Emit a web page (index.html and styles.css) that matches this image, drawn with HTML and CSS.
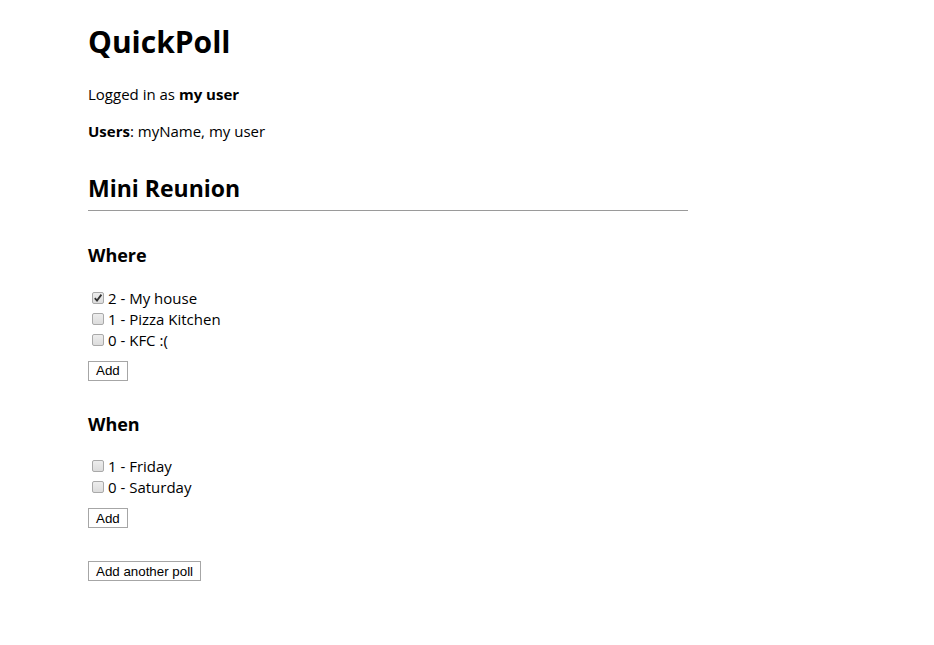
FILE: index.html
```html
<!DOCTYPE html>
<html>
<head>
<meta charset="utf-8">
<title>QuickPoll</title>
<link rel="stylesheet" href="styles.css">
</head>
<body>
<div class="app">
  <h1 class="title">QuickPoll</h1>
  <p class="info">Logged in as <b>my user</b></p>
  <p class="info"><b>Users</b>: myName, my user</p>
  <div class="poll">
    <h2 class="poll-title">Mini Reunion</h2>
    <div class="question">
      <h3 class="q-title">Where</h3>
      <ul class="options">
        <li class="option"><input type="checkbox" class="cb" checked><span>2 - My house</span></li>
        <li class="option"><input type="checkbox" class="cb"><span>1 - Pizza Kitchen</span></li>
        <li class="option"><input type="checkbox" class="cb"><span>0 - KFC :(</span></li>
      </ul>
      <button class="btn">Add</button>
    </div>
    <div class="question">
      <h3 class="q-title">When</h3>
      <ul class="options">
        <li class="option"><input type="checkbox" class="cb"><span>1 - Friday</span></li>
        <li class="option"><input type="checkbox" class="cb"><span>0 - Saturday</span></li>
      </ul>
      <button class="btn">Add</button>
    </div>
  </div>
  <button class="btn another">Add another poll</button>
</div>
</body>
</html>
```
FILE: styles.css
```css
html, body {
  margin: 0;
  padding: 0;
  background: #fff;
}
body {
  font-family: "Open Sans", "Noto Sans", sans-serif;
  font-size: 15px;
  color: #000;
}
.app {
  width: 600px;
  padding: 20px 0 40px 88px;
}
.title {
  font-size: 30px;
  font-weight: bold;
  margin: 0 0 20px 0;
  line-height: 44px;
}
.info {
  margin: 0 0 16px 0;
  line-height: 21px;
}
.poll-title {
  font-size: 23px;
  margin: 30px 0 0 0;
  line-height: 32px;
  padding-bottom: 6px;
  border-bottom: 1px solid #9a9a9a;
}
.question {
  margin-top: 32px;
}
.question + .question {
  margin-top: 31px;
}
.q-title {
  font-size: 18px;
  margin: 0 0 20px 0;
  line-height: 24px;
}
.options {
  list-style: none;
  margin: 0 0 9px 0;
  padding: 0;
}
.option {
  display: flex;
  align-items: center;
  height: 21px;
}
.cb {
  -webkit-appearance: none;
  appearance: none;
  margin: 0 4px 0 4px;
  width: 12px;
  height: 12px;
  border: 1px solid #a9a9a9;
  border-radius: 2px;
  background: linear-gradient(#ededed, #dcdcdc);
  box-sizing: border-box;
}
.cb:checked {
  background: url("data:image/svg+xml;utf8,<svg xmlns='http://www.w3.org/2000/svg' viewBox='0 0 10 10'><path d='M1.8 5.2 L4 7.6 L8.4 1.6' fill='none' stroke='%23333' stroke-width='1.8'/></svg>") center / 10px 10px no-repeat, linear-gradient(#ededed, #dcdcdc);
}
.btn {
  font-family: "Liberation Sans", Arial, sans-serif;
  font-size: 13.33px;
  background: #fff;
  border: 1px solid #a6a6a6;
  padding: 1px 7px;
  height: 20px;
  color: #000;
}
.another {
  margin-top: 33px;
}
```
